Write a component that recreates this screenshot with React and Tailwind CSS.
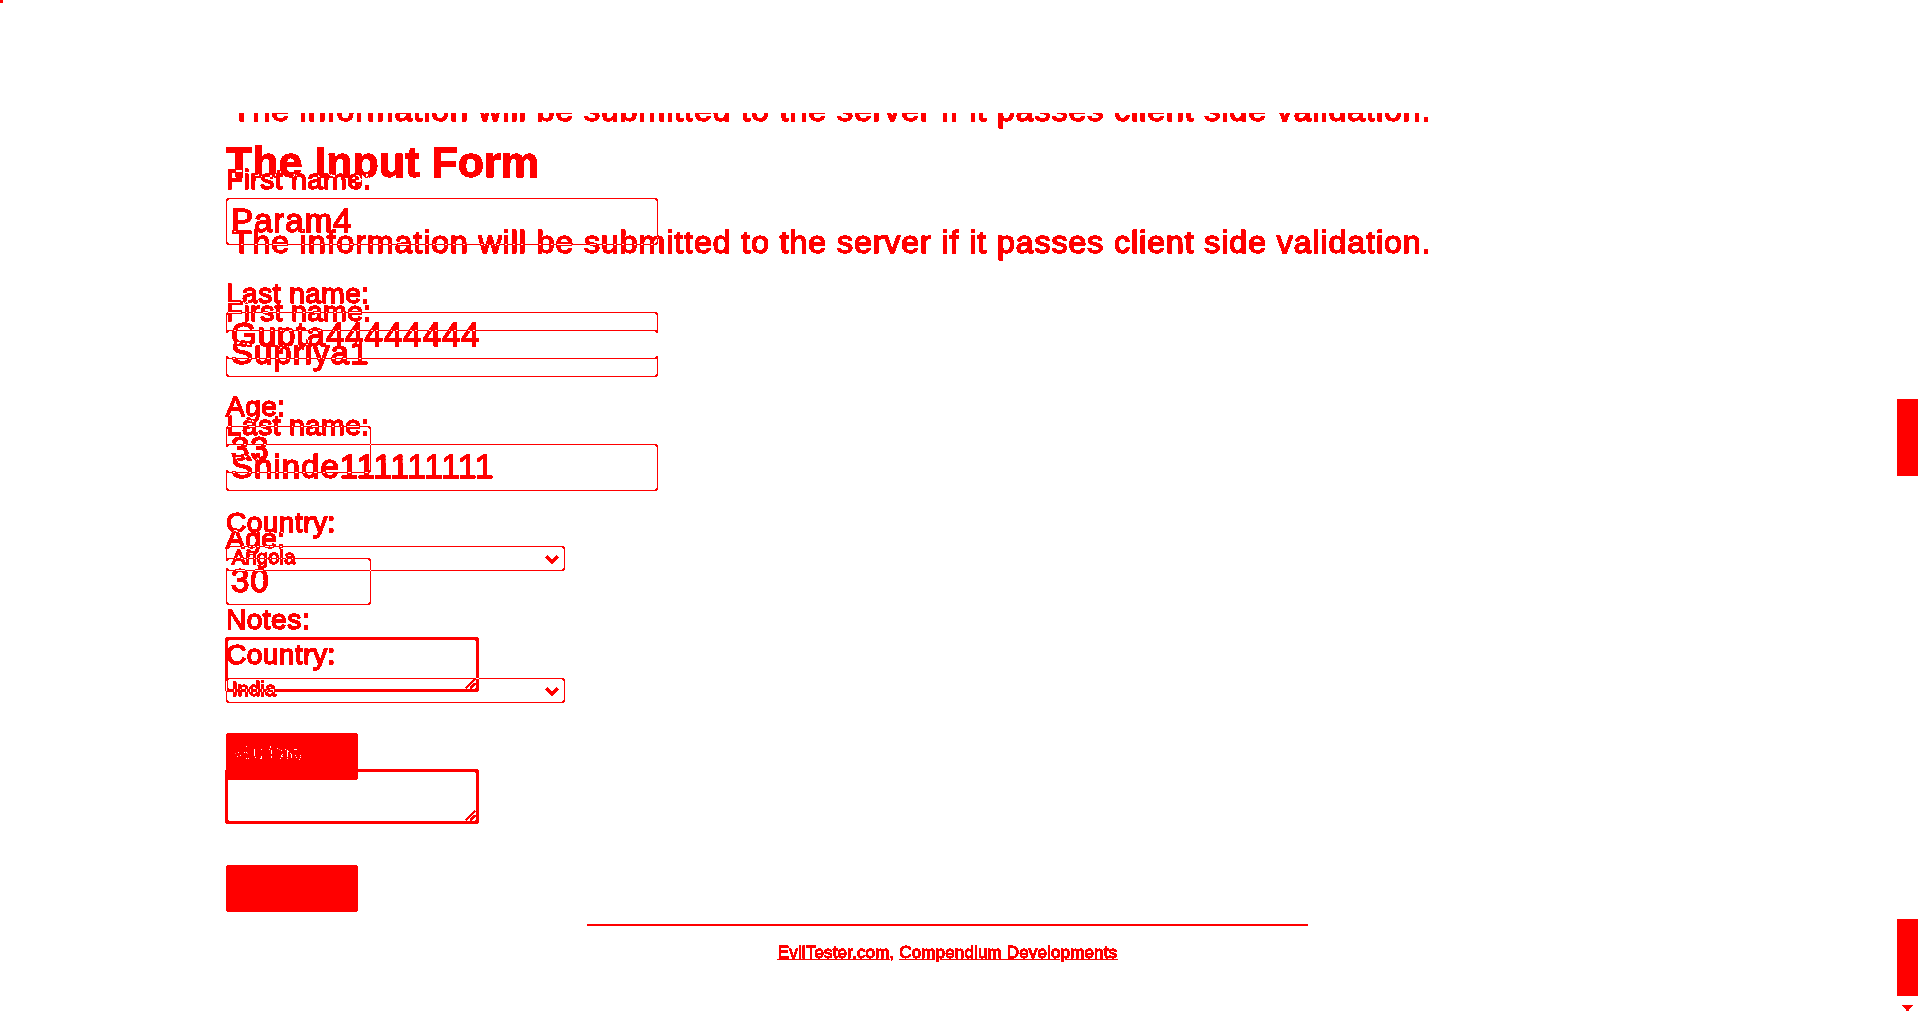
import React from "react";

function Chevron() {
  return (
    <svg width="14" height="9" viewBox="0 0 14 9" className="mt-[8px] shrink-0">
      <path d="M1.5 1.5 L7 7 L12.5 1.5" fill="none" stroke="black" strokeWidth="3" />
    </svg>
  );
}

const fieldCls =
  "block h-[47px] rounded-[3px] border border-black bg-white pb-[2px] pl-[4px] text-[33px] tracking-[1px] text-black outline-none [-webkit-text-stroke:0.7px_black]";

function Form({ first, last, age, country, submitLabel }) {
  return (
    <div className="pl-[226px] pt-[135px] [-webkit-text-stroke:0.7px_black]">
      <h1 className="text-[43px] font-bold leading-[48px] [-webkit-text-stroke:0.4px_black]">The Input Form</h1>
      <p className="mt-[38px] whitespace-nowrap pl-[6px] text-[32px] leading-[37px] tracking-[0.96px]">
        The information will be submitted to the server if it passes client side validation.
      </p>

      <label className="mt-[35px] block text-[28px] leading-[32px] tracking-[0.5px]">First name:</label>
      <input readOnly value={first} className={`mt-[2px] w-[432px] ${fieldCls}`} />

      <label className="mt-[33px] block text-[28px] leading-[32px] tracking-[0.5px]">Last name:</label>
      <input readOnly value={last} className={`mt-[2px] w-[432px] ${fieldCls}`} />

      <label className="mt-[32px] block text-[28px] leading-[32px] tracking-[0.5px]">Age:</label>
      <input readOnly value={age} className={`mt-[3px] w-[145px] ${fieldCls}`} />

      <label className="mt-[34px] block text-[28px] leading-[32px] tracking-[0.5px]">Country:</label>
      <div className="mt-[7px] flex h-[25px] w-[339px] items-start justify-between rounded-[3px] border border-black bg-white pl-[5px] pr-[5px]">
        <span className="text-[20px] leading-[20px] tracking-[0.2px]">{country}</span>
        <Chevron />
      </div>

      <label className="mt-[33px] block text-[28px] leading-[32px] tracking-[0.5px]">Notes:</label>
      <div className="relative -ml-px mt-[1px] h-[55px] w-[254px]">
        <textarea
          readOnly
          className="block h-full w-full resize-none rounded-[4px] border-[3px] border-black bg-white outline-none"
        />
        <svg width="12" height="12" viewBox="0 0 12 12" className="absolute bottom-[3px] right-[3px]">
          <path d="M11 2 L2 11 M11 6.5 L6.5 11" stroke="black" strokeWidth="1.6" fill="none" />
        </svg>
      </div>

      <button
        type="button"
        className="mt-[41px] block h-[47px] w-[132px] rounded-[3px] bg-[#808080] pb-[7px] pl-[14px] text-left text-[19px] leading-[22px] text-[#f6f6f6] [-webkit-text-stroke:0px_transparent]"
      >
        {submitLabel}
      </button>
    </div>
  );
}

export default function App() {
  return (
    <div className="relative isolate h-[1020px] w-full overflow-hidden bg-white font-['Liberation_Sans',Arial,sans-serif] text-black">
      <div className="relative isolate h-[1020px] overflow-hidden bg-white [filter:grayscale(1)_brightness(8)_contrast(50)_invert(1)]">
        {/* later screenshot */}
        <div className="flex h-[1020px] bg-white">
          <main className="flex-1">
            <div className="h-[3px] w-[3px] bg-black" />
            <Form first="Supriya1" last="Shinde111111111" age="30" country="India" submitLabel="" />
            <div className="mx-auto mt-[12px] h-[2px] w-[721px] bg-black" />
            <p className="mt-[17px] text-center text-[17px] leading-[20px] tracking-[0.15px] [-webkit-text-stroke:0.3px_black]">
              <a href="#" className="underline">EvilTester.com</a>,{" "}
              <a href="#" className="underline">Compendium Developments</a>
            </p>
          </main>
          <aside className="flex w-[25px] flex-col">
            <div className="ml-[2px] mt-[399px] h-[77px] w-[21px] bg-black" />
            <div className="ml-[2px] mt-[443px] h-[77px] w-[21px] bg-black" />
            <svg width="11" height="6" viewBox="0 0 11 6" className="ml-[7px] mt-[9px]">
              <path d="M0 0 H11 L5.5 6 Z" fill="black" />
            </svg>
          </aside>
        </div>

        {/* earlier screenshot, compared against the later one */}
        <div className="absolute inset-0 overflow-hidden bg-white mix-blend-difference">
          <div className="-mt-[129px]">
            <Form first="Param4" last="Gupta44444444" age="33" country="Angola" submitLabel="Submit" />
          </div>
          <div className="absolute inset-x-0 top-0 h-[113px] bg-white" />
        </div>
      </div>
      <div className="pointer-events-none absolute inset-0 bg-[#ff0000] mix-blend-screen" />
    </div>
  );
}
